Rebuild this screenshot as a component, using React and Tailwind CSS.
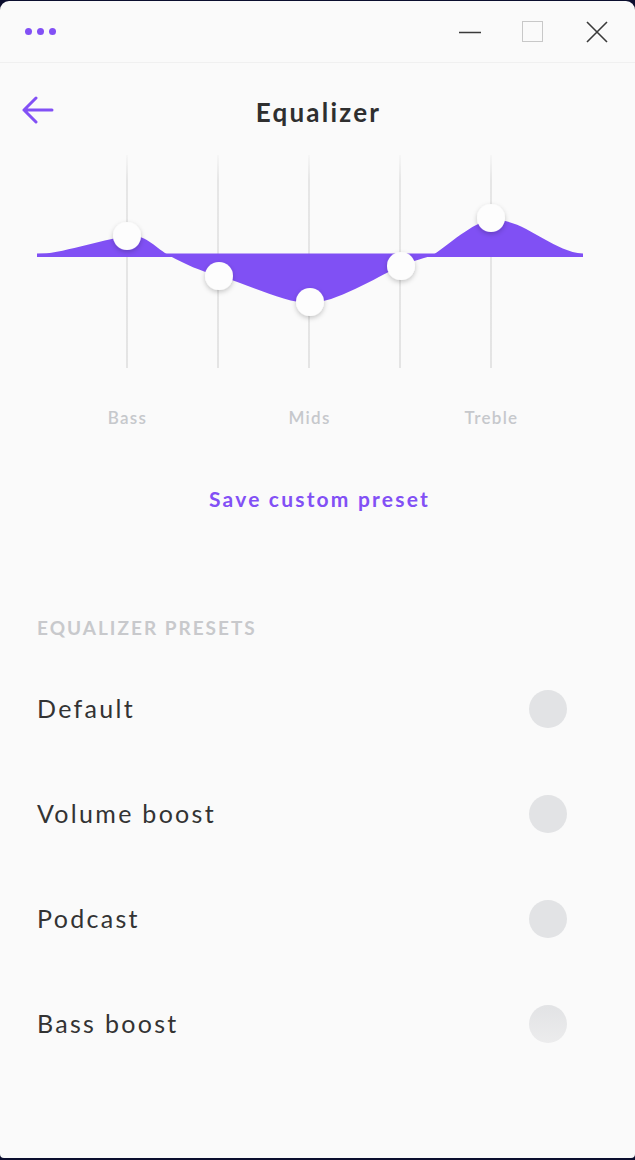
import React from "react";

const font = { fontFamily: "Lato, 'Noto Sans', 'Liberation Sans', sans-serif" };

function Chart() {
  const lines = [127, 218, 309, 400, 491];
  const knobs = [
    [127, 236],
    [219, 276],
    [310, 302],
    [401, 266],
    [491, 218],
  ];
  return (
    <svg width="635" height="220" viewBox="0 150 635 220" className="block">
      <defs>
        <linearGradient id="lg" x1="0" y1="0" x2="0" y2="1">
          <stop offset="0" stopColor="#e6e6e6" stopOpacity="0.2" />
          <stop offset="0.12" stopColor="#e6e6e6" stopOpacity="1" />
          <stop offset="1" stopColor="#e4e4e4" stopOpacity="1" />
        </linearGradient>
        <filter id="sh" x="-50%" y="-50%" width="200%" height="200%">
          <feDropShadow dx="0" dy="2" stdDeviation="2.5" floodColor="#000" floodOpacity="0.22" />
        </filter>
      </defs>
      {lines.map((x) => (
        <rect key={x} x={x - 1} y={155} width="2" height="213" fill="url(#lg)" />
      ))}
      <path
        d="M37,254 C60,254 100,240 127,236 C145,233 155,248 170,256 C185,264 200,271 219,276 C250,285 285,303 310,303 C335,303 375,278 401,266 C415,260 425,258 433,255 C455,240 475,220 495,220 C525,220 550,250 583,254 L583,257 L37,257 Z"
        fill="#8050f4"
      />
      <rect x="37" y="253.5" width="546" height="3.5" fill="#8050f4" />
      {knobs.map(([x, y]) => (
        <circle key={x} cx={x} cy={y} r="14" fill="#fdfdfd" filter="url(#sh)" />
      ))}
    </svg>
  );
}

const presets = ["Default", "Volume boost", "Podcast", "Bass boost"];

export default function App() {
  return (
    <div className="w-[635px] h-[1160px] bg-[#0b0e2e] pt-px pb-[2px]" style={font}>
      <div className="h-full bg-[#fafafa] rounded-t-[9px] rounded-b-[4px] flex flex-col overflow-hidden">
        {/* Title bar */}
        <div className="h-[62px] shrink-0 border-b border-[#f0f0f0] flex items-center pl-[25px] pr-[27px]">
          <div className="flex items-center gap-[5px] mt-[-1px]">
            <span className="w-[7px] h-[7px] rounded-full bg-[#8250f5]" />
            <span className="w-[7px] h-[7px] rounded-full bg-[#8250f5]" />
            <span className="w-[7px] h-[7px] rounded-full bg-[#8250f5]" />
          </div>
          <div className="ml-auto flex items-center">
            <svg width="22" height="22" viewBox="0 0 22 22">
              <line x1="0" y1="11.5" x2="22" y2="11.5" stroke="#3a3a3a" strokeWidth="1.3" />
            </svg>
            <div className="ml-[41px] w-[21px] h-[21px] border border-[#c8c8c8]" />
            <svg className="ml-[43px]" width="22" height="22" viewBox="0 0 22 22">
              <path d="M1 1 L21 21 M21 1 L1 21" stroke="#3a3a3a" strokeWidth="1.6" fill="none" />
            </svg>
          </div>
        </div>

        {/* Header */}
        <div className="grid grid-cols-[60px_1fr_60px] items-start pt-[33px]">
          <div className="pl-[22px]">
            <svg width="32" height="28" viewBox="0 0 32 28">
              <path
                d="M2 14 H30 M14 2 L2 14 L14 26"
                stroke="#8250f5"
                strokeWidth="3"
                strokeLinecap="round"
                strokeLinejoin="round"
                fill="none"
              />
            </svg>
          </div>
          <div className="text-center text-[26px] leading-[32px] font-bold text-[#2f2f2f] tracking-[2.2px] pl-[2px]">
            Equalizer
          </div>
          <div />
        </div>

        {/* Chart */}
        <div className="mt-[22px]">
          <Chart />
        </div>

        {/* Labels */}
        <div className="ml-[82px] w-[455px] grid grid-cols-5 text-center mt-[38px] text-[17px] leading-[20px] font-semibold text-[#c6c8cc] tracking-[1.3px]">
          <div>Bass</div>
          <div />
          <div>Mids</div>
          <div />
          <div>Treble</div>
        </div>

        <div className="mt-[58px] text-center text-[21px] leading-[25px] font-bold text-[#8250f5] tracking-[2.2px] pl-[4px]">
          Save custom preset
        </div>

        <div className="mt-[105px] pl-[37px] text-[19px] leading-[23px] font-bold text-[#c8c9cc] uppercase tracking-[2px]">
          Equalizer presets
        </div>

        <div className="mt-[17px] flex flex-col">
          {presets.map((p, i) => (
            <div key={p} className="h-[105px] flex items-center pl-[37px] pr-[68px]">
              <span className="text-[25px] text-[#333333] tracking-[2.3px]">{p}</span>
              <span
                className={
                  "ml-auto w-[38px] h-[38px] rounded-full " +
                  (i === 3 ? "bg-gradient-to-b from-[#e2e3e5] to-[#ececed]" : "bg-[#e2e3e5]")
                }
              />
            </div>
          ))}
        </div>
      </div>
    </div>
  );
}
